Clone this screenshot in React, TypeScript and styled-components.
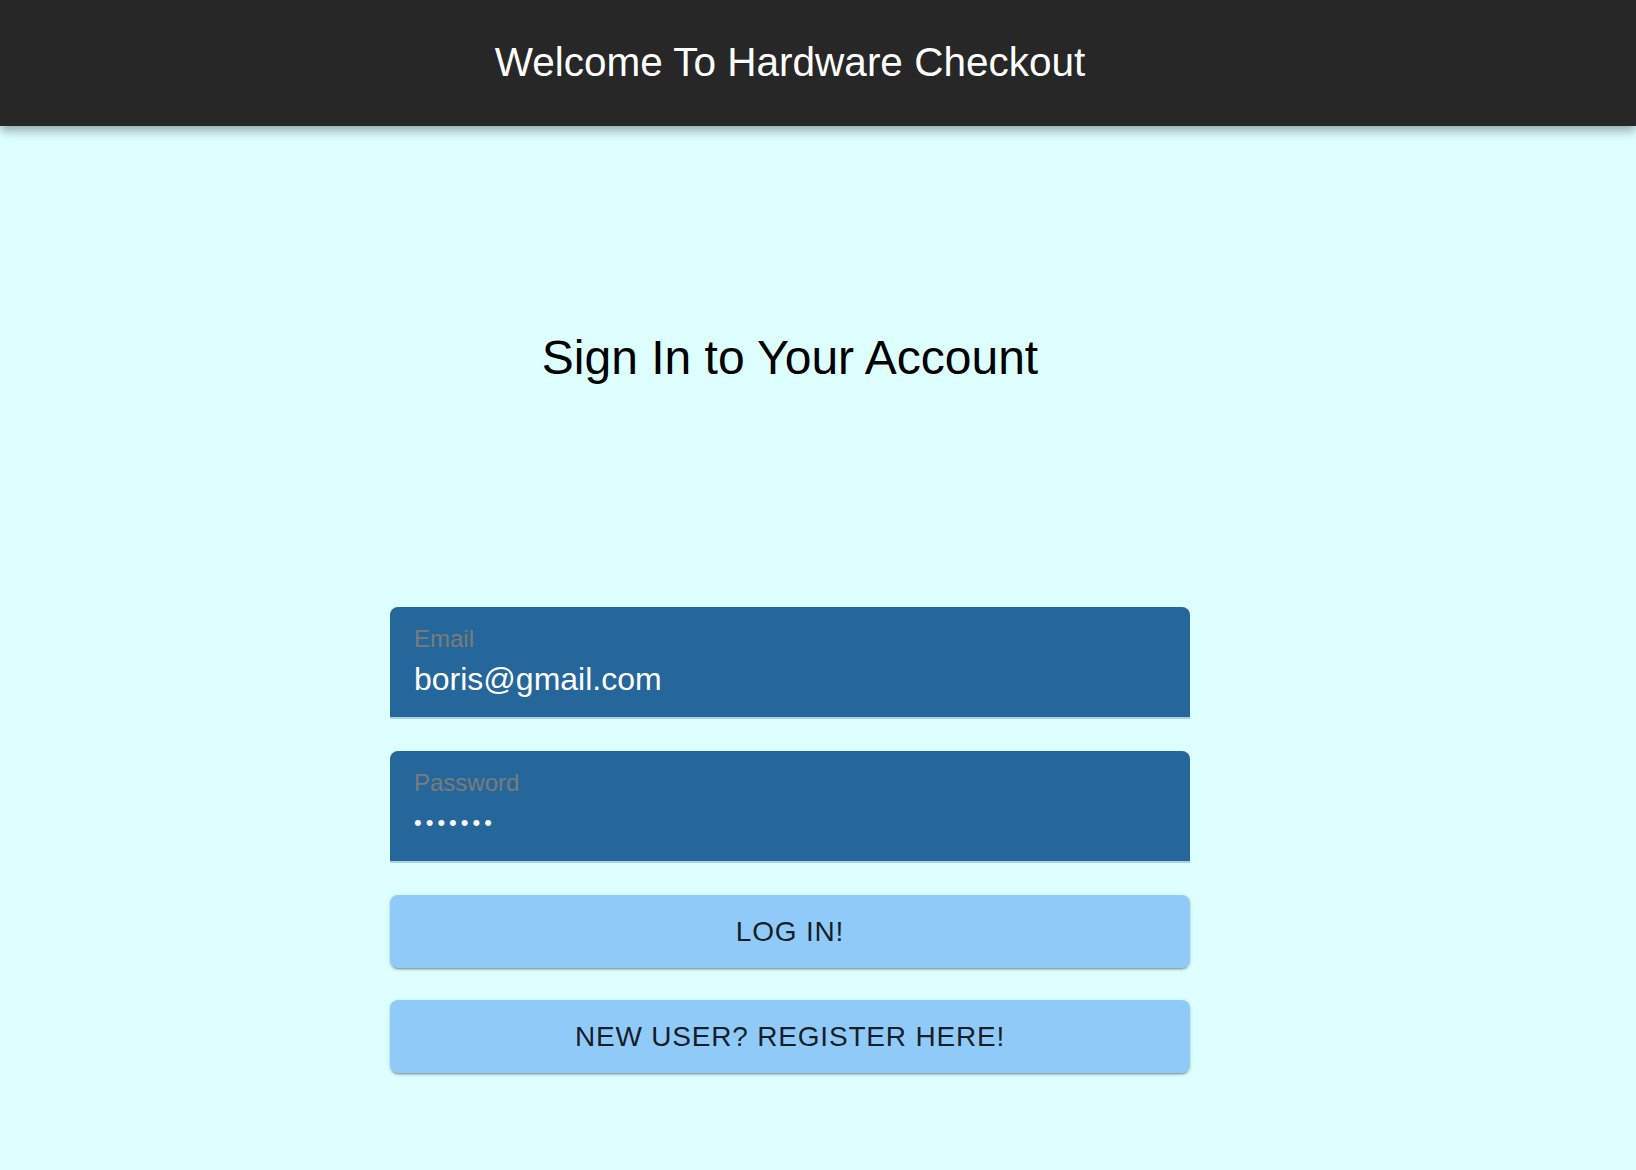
import React from "react";
import styled, { createGlobalStyle } from "styled-components";

const GlobalStyle = createGlobalStyle`
  html, body {
    margin: 0;
    padding: 0;
    background: #ddfffe;
    font-family: "Liberation Sans", Arial, Helvetica, sans-serif;
  }
  * { box-sizing: border-box; }
`;

const Page = styled.div`
  min-height: 1170px;
  background: #ddfffe;
  display: flex;
  flex-direction: column;
`;

const AppBar = styled.header`
  height: 126px;
  background: #272727;
  color: #ffffff;
  display: flex;
  align-items: center;
  justify-content: center;
  padding: 0 56px 2px 0;
  box-shadow: 0 4px 8px -1px rgba(0, 0, 0, 0.25), 0 8px 10px 0 rgba(0, 0, 0, 0.12);
  position: relative;
  z-index: 1;
`;

const AppTitle = styled.h1`
  margin: 0;
  font-size: 40.5px;
  font-weight: 400;
  line-height: 1.2;
`;

const Main = styled.main`
  display: flex;
  flex-direction: column;
  align-items: center;
  padding-right: 56px;
`;

const Heading = styled.h2`
  margin: 204px 0 0;
  font-size: 48px;
  font-weight: 400;
  line-height: 1.167;
  color: #000000;
`;

const Form = styled.form`
  width: 800px;
  margin-top: 221px;
  display: flex;
  flex-direction: column;
  gap: 32px;
`;

const Field = styled.label`
  height: 112px;
  display: flex;
  flex-direction: column;
  padding: 20px 24px 0;
  background: #25679a;
  border-radius: 8px 8px 0 0;
  border-bottom: 2px solid #a9d0e6;
`;

const FieldLabel = styled.span`
  font-size: 24px;
  line-height: 1;
  color: #7b7b7b;
`;

const FieldInput = styled.input<{ $masked?: boolean }>`
  margin-top: 9px;
  padding: 0;
  border: 0;
  outline: none;
  background: transparent;
  color: #ffffff;
  font-family: inherit;
  font-size: ${({ $masked }) => ($masked ? "22px" : "32px")};
  letter-spacing: ${({ $masked }) => ($masked ? "4px" : "0")};
  height: 38px;
  line-height: 1.2;
  width: 100%;
`;

const Button = styled.button`
  height: 73px;
  border: 0;
  border-radius: 8px;
  background: #90caf9;
  color: rgba(0, 0, 0, 0.87);
  font-family: inherit;
  font-size: 28px;
  font-weight: 400;
  letter-spacing: 0.8px;
  text-transform: uppercase;
  cursor: pointer;
  box-shadow: 0 3px 1px -2px rgba(0, 0, 0, 0.2), 0 2px 2px 0 rgba(0, 0, 0, 0.14),
    0 1px 5px 0 rgba(0, 0, 0, 0.12);
`;

export default function App() {
  return (
    <Page>
      <GlobalStyle />
      <AppBar>
        <AppTitle>Welcome To Hardware Checkout</AppTitle>
      </AppBar>
      <Main>
        <Heading>Sign In to Your Account</Heading>
        <Form onSubmit={(e) => e.preventDefault()}>
          <Field>
            <FieldLabel>Email</FieldLabel>
            <FieldInput type="email" value="boris@gmail.com" readOnly />
          </Field>
          <Field>
            <FieldLabel>Password</FieldLabel>
            <FieldInput type="password" value="1234567" readOnly $masked />
          </Field>
          <Button type="submit">Log In!</Button>
          <Button type="button">New User? Register Here!</Button>
        </Form>
      </Main>
    </Page>
  );
}
